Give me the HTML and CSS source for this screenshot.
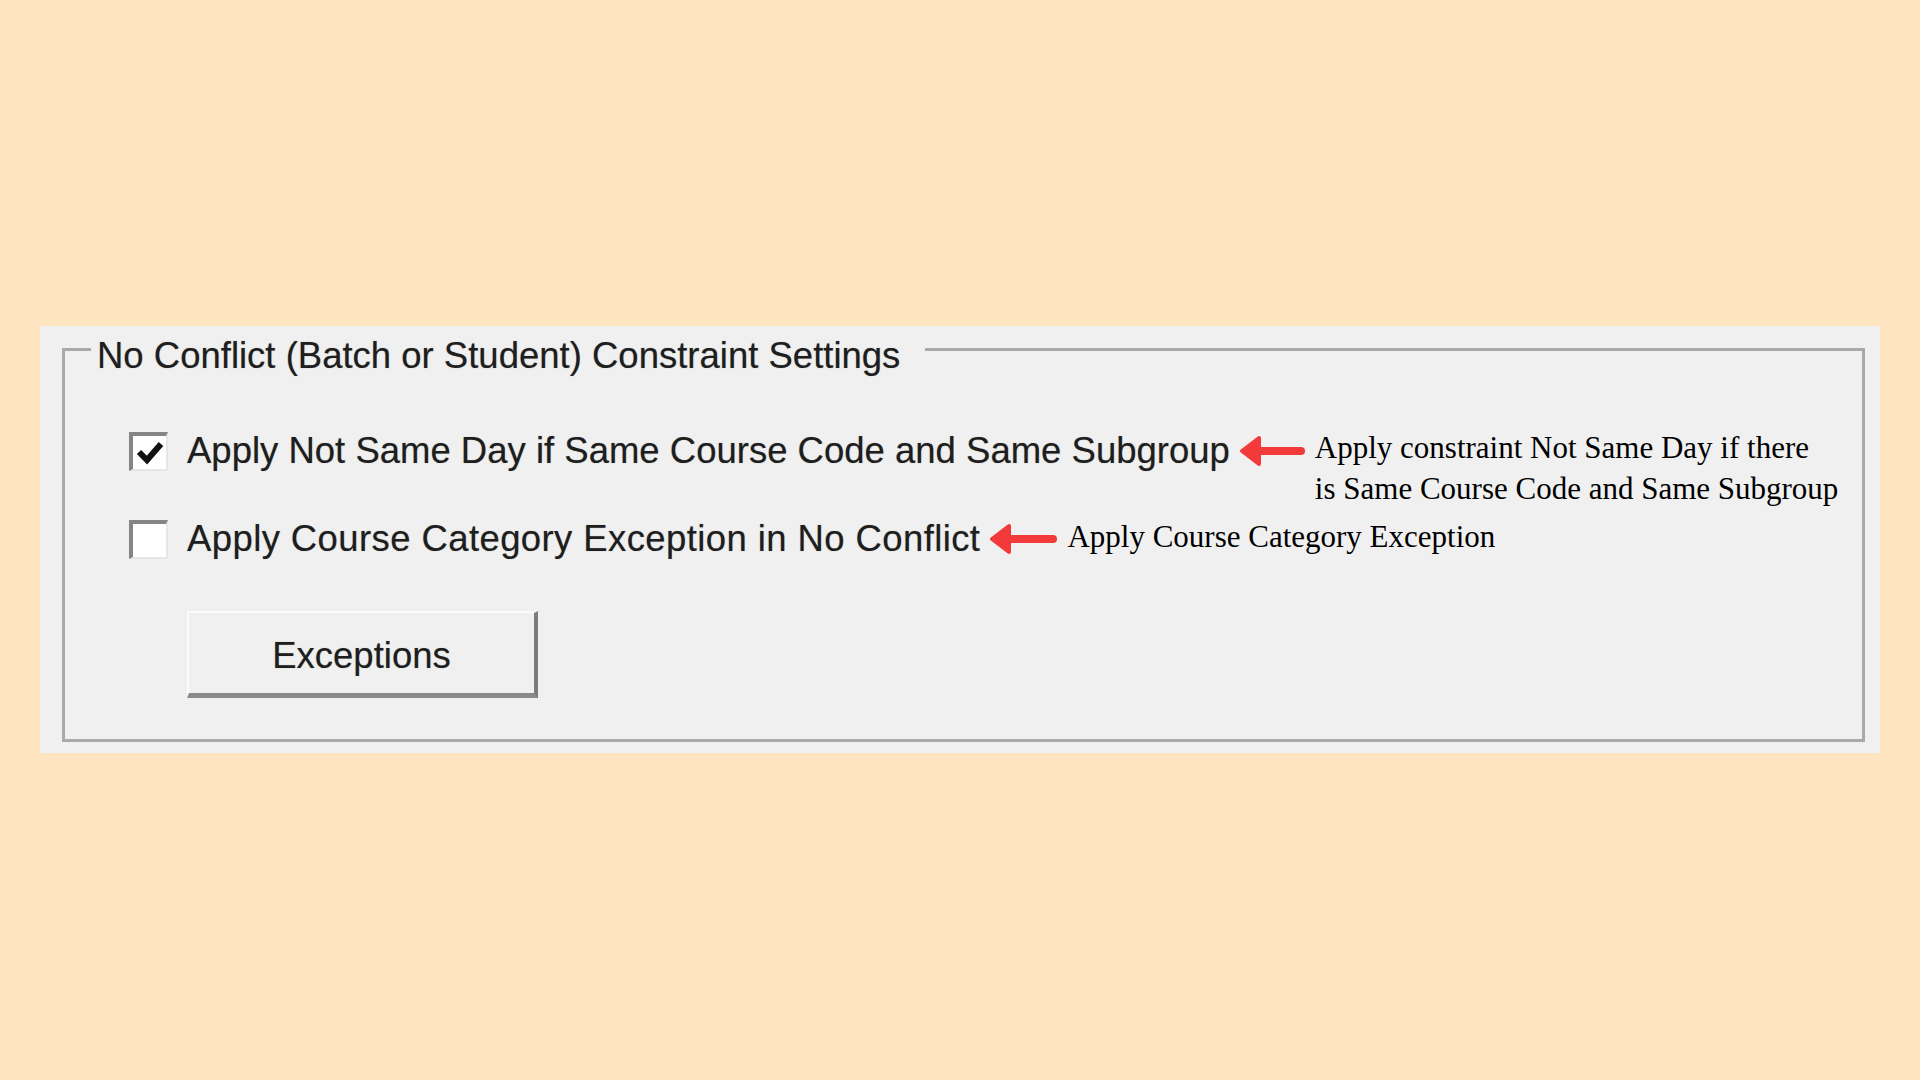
FILE: index.html
```html
<!DOCTYPE html>
<html lang="en">
<head>
    <meta charset="UTF-8">
    <title>No Conflict Constraint Settings</title>
    <link rel="stylesheet" href="styles.css">
</head>
<body>
    <div class="panel">
        <fieldset class="group">
            <legend>No Conflict (Batch or Student) Constraint Settings</legend>

            <div class="options">
                <!-- row 1 -->
                <div class="row">
                    <span class="check checked">
                        <svg width="28" height="24" viewBox="0 0 28 24"><path d="M3 11 L11 19 L25 3" fill="none" stroke="#111" stroke-width="6" stroke-linejoin="miter"/></svg>
                    </span>
                    <span class="label">Apply Not Same Day if Same Course Code and Same Subgroup</span>
                    <svg class="arrow" width="66" height="32" viewBox="0 0 66 32"><line x1="20" y1="16" x2="62" y2="16" stroke="#f23a3a" stroke-width="8" stroke-linecap="round"/><polygon points="3,16 20,3 20,29" fill="#f23a3a" stroke="#f23a3a" stroke-width="4" stroke-linejoin="round"/></svg>
                    <span class="note note-two">Apply constraint Not Same Day if there<br>is Same Course Code and Same Subgroup</span>
                </div>

                <!-- row 2 -->
                <div class="row">
                    <span class="check"></span>
                    <span class="label label-wide">Apply Course Category Exception in No Conflict</span>
                    <svg class="arrow" width="68" height="32" viewBox="0 0 68 32"><line x1="20" y1="16" x2="64" y2="16" stroke="#f23a3a" stroke-width="8" stroke-linecap="round"/><polygon points="3,16 20,3 20,29" fill="#f23a3a" stroke="#f23a3a" stroke-width="4" stroke-linejoin="round"/></svg>
                    <span class="note note-up">Apply Course Category Exception</span>
                </div>

                <button class="btn">Exceptions</button>
            </div>
        </fieldset>
    </div>
</body>
</html>
```

FILE: styles.css
```css
body {
    margin: 0;
    background-color: #ffe5bf;
    padding: 326px 0 0 40px;
    font-family: "Liberation Sans", Arial, sans-serif;
}

.panel {
    width: 1840px;
    height: 427px;
    box-sizing: border-box;
    background: #f0f0f0;
    padding: 3px 15px 11px 22px;
    display: flex;
}

.group {
    flex: 1;
    margin: 0;
    padding: 0;
    border: 3px solid #a9a9a9;
    min-width: 0;
}

.group legend {
    margin-left: 26px;
    padding: 14px 25px 0 6px;
    font-size: 36.5px;
    line-height: 26px;
    color: #1e1e1e;
    text-shadow: 0 0 1px rgba(0, 0, 0, 0.35);
}

.options {
    padding: 57px 0 0 64px;
}

.row {
    display: flex;
    align-items: center;
    height: 50px;
    margin-bottom: 38px;
}

.check {
    width: 39px;
    height: 39px;
    box-sizing: border-box;
    background: #fff;
    border-top: 4px solid #858585;
    border-left: 4px solid #858585;
    border-right: 2px solid #e6e6e6;
    border-bottom: 2px solid #e6e6e6;
    display: flex;
    align-items: center;
    justify-content: center;
    flex-shrink: 0;
}

.check svg {
    margin-top: 2px;
}

.label {
    margin-left: 19px;
    font-size: 36.5px;
    color: #1e1e1e;
    white-space: nowrap;
    text-shadow: 0 0 1px rgba(0, 0, 0, 0.35);
}

.label-wide {
    letter-spacing: 0.4px;
}

.arrow {
    margin-left: 9px;
    flex-shrink: 0;
}

.note {
    margin-left: 10px;
    font-family: "Liberation Serif", "Times New Roman", serif;
    font-size: 31px;
    line-height: 41px;
    color: #000;
    white-space: nowrap;
}

.note-two {
    align-self: flex-start;
    margin-top: 1px;
}

.note-up {
    margin-top: -5px;
}

.btn {
    display: block;
    margin: 47px 0 0 58px;
    width: 351px;
    height: 87px;
    box-sizing: border-box;
    background: #f0f0f0;
    border-top: 2px solid #fbfbfb;
    border-left: 2px solid #fbfbfb;
    border-right: 4px solid #7d7d7d;
    border-bottom: 5px solid #8a8a8a;
    font-family: "Liberation Sans", Arial, sans-serif;
    font-size: 36.5px;
    color: #1e1e1e;
    text-shadow: 0 0 1px rgba(0, 0, 0, 0.35);
    padding: 6px 0 0;
}
```
